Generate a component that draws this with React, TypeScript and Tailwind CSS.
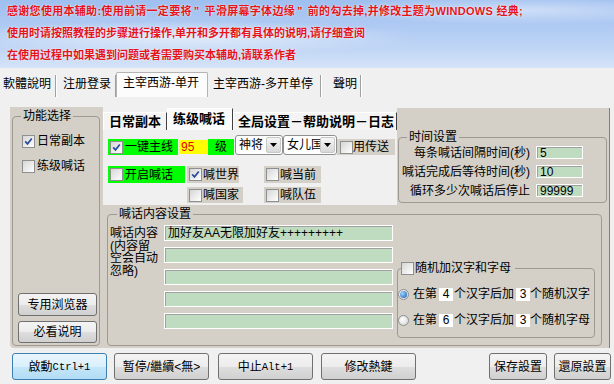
import type { ReactNode } from "react";
import clsx from "clsx";

function Check({ on = false }: { on?: boolean }) {
  return (
    <span className="flex h-[13px] w-[13px] shrink-0 items-center justify-center border border-[#8e8f8f] bg-[linear-gradient(135deg,#d6d6d6,#ffffff)]">
      {on && (
        <svg width="9" height="9" viewBox="0 0 9 9">
          <path d="M1.2 4.4 3.5 6.9 7.8 1.5" fill="none" stroke="#2b4d9c" strokeWidth="1.7" />
        </svg>
      )}
    </span>
  );
}

function Radio({ on = false }: { on?: boolean }) {
  return (
    <span className="flex h-[11px] w-[11px] shrink-0 items-center justify-center rounded-full border border-[#8e8f8f] bg-[radial-gradient(circle_at_40%_40%,#ffffff,#cfcfcf)]">
      {on && (
        <span className="h-[7px] w-[7px] rounded-full bg-[radial-gradient(circle_at_35%_35%,#9ad6ff,#1a56b0)]" />
      )}
    </span>
  );
}

function Btn({
  children,
  className,
  primary = false,
}: {
  children: ReactNode;
  className?: string;
  primary?: boolean;
}) {
  return (
    <div
      className={clsx(
        "flex shrink-0 items-center justify-center rounded-[3px] border",
        primary
          ? "border-[#3c7fb1] bg-[linear-gradient(#eaf6fd_0%,#d9f0fc_50%,#c4e6fa_51%,#b2dcf5_100%)]"
          : "border-[#707070] bg-[linear-gradient(#f4f4f4_0%,#ececec_50%,#dedede_51%,#d0d0d0_100%)]",
        className
      )}
    >
      {children}
    </div>
  );
}

function Select({ text, w }: { text: string; w: string }) {
  return (
    <div className={clsx("flex h-[20px] items-center rounded-[3px] border border-[#8e8f8f] bg-white pl-[3px]", w)}>
      <span className="w-0 flex-1 overflow-hidden whitespace-nowrap">{text}</span>
      <span className="mr-[1px] flex h-[16px] w-[15px] items-center justify-center rounded-[2px] border border-[#c8c8c8] bg-[linear-gradient(#f6f6f6,#d8d8d8)]">
        <svg width="7" height="4" viewBox="0 0 7 4">
          <path d="M0 0h7L3.5 4z" fill="#000" />
        </svg>
      </span>
    </div>
  );
}

const field = "border border-white bg-[#c0dcc0] shadow-[inset_1px_1px_0_#a0a0a0]";
const mono = "font-[family-name:'Liberation_Mono',monospace] text-[10.5px]";

export default function App() {
  return (
    <div className="h-[384px] w-[614px] overflow-hidden bg-[#f0f0f0] font-[family-name:'Liberation_Sans','Noto_Sans_CJK_SC',sans-serif] text-[12px] leading-[14px] text-black">
      {/* banner */}
      <div className="h-[68px] bg-[radial-gradient(ellipse_55%_35%_at_30%_55%,rgba(255,255,255,0.6),transparent_70%),radial-gradient(ellipse_45%_30%_at_85%_15%,rgba(255,255,255,0.45),transparent_70%),linear-gradient(180deg,#9fbff0_0%,#b6cff4_55%,#d4e3f8_100%)] pl-[7px] text-[11px] leading-[22px] font-bold whitespace-nowrap text-[#e5141b] [text-shadow:0_0_2px_#ffffff]">
        <p className="tracking-[0.3px]">
          感谢您使用本辅助:使用前请一定要将<span className="mr-[5px] ml-[2px]">”</span>平滑屏幕字体边缘<span className="mr-[5px] ml-[2px]">”</span>前的勾去掉,并修改主题为WINDOWS 经典;
        </p>
        <p>使用时请按照教程的步骤进行操作,单开和多开都有具体的说明,请仔细查阅</p>
        <p>在使用过程中如果遇到问题或者需要购买本辅助,请联系作者</p>
      </div>

      {/* outer tabs */}
      <div className="flex h-[29px] items-start pt-[4px]">
        <div className="mt-[3px] h-[22px] w-[56px] border-r border-[#a0a0a0] pt-[2px] pl-[3px] shadow-[1px_0_0_#ffffff]">軟體說明</div>
        <div className="mt-[3px] h-[22px] w-[60px] border-r border-[#a0a0a0] pt-[2px] pl-[7px] shadow-[1px_0_0_#ffffff]">注册登录</div>
        <div className="h-[25px] w-[92px] rounded-t-[2px] border border-b-0 border-[#b4b4b4] bg-[#fcfcfc] pt-[3px] pl-[6px]">主宰西游-单开</div>
        <div className="mt-[3px] h-[22px] w-[113px] border-r border-[#a0a0a0] pt-[2px] pl-[5px] shadow-[1px_0_0_#ffffff]">主宰西游-多开单停</div>
        <div className="mt-[3px] h-[22px] w-[40px] border-r border-[#a0a0a0] pt-[2px] pl-[12px] shadow-[1px_0_0_#ffffff]">聲明</div>
      </div>

      {/* page */}
      <div className="flex h-[253px] pt-[10px] pl-[10px]">
        {/* 功能选择 */}
        <div className="h-[241px] w-[93px] rounded-bl-[4px] bg-[#d4d0c8] pt-[2px] pr-[3px] pl-[2px]">
          <fieldset className="h-[237px] rounded-[4px] border border-[#9e9a91]">
            <legend className="ml-[8px] px-[2px]">功能选择</legend>
            <div className="flex h-[222px] flex-col pb-[2px]">
              <div className="mt-[11px] flex items-center pl-[9px]">
                <Check on />
                <span className="ml-[2px]">日常副本</span>
              </div>
              <div className="mt-[11px] flex items-center pl-[9px]">
                <Check />
                <span className="ml-[2px]">练级喊话</span>
              </div>
              <Btn className="mt-auto ml-[5px] h-[23px] w-[79px]">专用浏览器</Btn>
              <Btn className="mt-[5px] ml-[5px] h-[22px] w-[79px]">必看说明</Btn>
            </div>
          </fieldset>
        </div>

        {/* inner tab control */}
        <div className="mt-[1px] flex h-[240px] w-[507px] flex-col border-r border-[#808080]">
          <div className="flex h-[97px]">
            <div className="w-[294px]">
              <div className="flex h-[22px] items-end text-[13px] font-bold">
                <div className="h-[18px] w-[64px] border-t border-r border-l border-white border-r-[#404040] bg-[#f4f4f4] pl-[5px] leading-[18px]">日常副本</div>
                <div className="h-[22px] w-[66px] border-t border-r border-l border-white border-r-[#404040] bg-[#fbfbfb] pt-[1px] pl-[5px] leading-[18px]">练级喊话</div>
                <div className="h-[18px] w-[164px] border-t border-r border-l border-white border-r-[#404040] bg-[#f4f4f4] pl-[4px] leading-[18px] whitespace-nowrap">全局设置－帮助说明－日志</div>
              </div>
              <div className="h-[75px] pt-[5px] pl-[5px]">
                <div className="flex h-[20px] items-end">
                  <div className="flex h-[16px] w-[70px] items-center bg-[#00ff00] pl-[2px]">
                    <Check on />
                    <span className="ml-[2px]">一键主线</span>
                  </div>
                  <div className="mb-[1px] ml-[1px] h-[14px] w-[28px] bg-[#ffff00] pl-[2px] leading-[14px] text-[#e00000]">95</div>
                  <div className="ml-[1px] h-[16px] w-[26px] bg-[#00ff00] pl-[7px] leading-[16px]">级</div>
                  <div className="ml-[1px]"><Select text="神将" w="w-[48px]" /></div>
                  <Select text="女儿国" w="w-[54px]" />
                  <div className="flex h-[16px] w-[58px] items-center bg-[#d4d0c8] pl-[3px]">
                    <Check />
                    <span>用传送</span>
                  </div>
                </div>
                <div className="mt-[11px] flex">
                  <div className="flex h-[17px] w-[77px] items-center bg-[#00ff00] pl-[2px]">
                    <Check />
                    <span className="ml-[2px]">开启喊话</span>
                  </div>
                  <div className="ml-[2px] flex flex-col gap-[4px]">
                    <div className="flex h-[17px] w-[52px] items-center bg-[#d4d0c8] pl-[2px]">
                      <Check on />
                      <span className="ml-[1px]">喊世界</span>
                    </div>
                    <div className="flex h-[16px] w-[56px] items-center bg-[#d4d0c8] pl-[2px]">
                      <Check />
                      <span className="ml-[1px]">喊国家</span>
                    </div>
                  </div>
                  <div className="ml-[21px] flex flex-col gap-[4px]">
                    <div className="flex h-[17px] w-[57px] items-center bg-[#d4d0c8] pl-[2px]">
                      <Check />
                      <span className="ml-[1px]">喊当前</span>
                    </div>
                    <div className="flex h-[16px] w-[57px] items-center bg-[#d4d0c8] pl-[2px]">
                      <Check />
                      <span className="ml-[1px]">喊队伍</span>
                    </div>
                  </div>
                </div>
              </div>
            </div>

            {/* 时间设置 */}
            <div className="w-[212px] bg-[#d4d0c8] pt-[23px] pr-[2px] pl-[1px]">
              <fieldset className="rounded-[4px] border border-[#9e9a91] pb-[2px]">
                <legend className="ml-[8px] px-[2px] leading-[12px]">时间设置</legend>
                {[
                  ["每条喊话间隔时间(秒)", "5"],
                  ["喊话完成后等待时间(秒)", "10"],
                  ["循环多少次喊话后停止", "99999"],
                ].map(([label, v]) => (
                  <div key={label} className="flex h-[19px] items-center">
                    <span className="w-[131px] text-right whitespace-nowrap">{label}</span>
                    <span className={clsx(field, "ml-[6px] h-[13px] w-[47px] pl-[3px] leading-[12px]")}>{v}</span>
                  </div>
                ))}
              </fieldset>
            </div>
          </div>

          {/* 喊话内容设置 */}
          <div className="h-[143px] bg-[#d4d0c8] pt-[2px] pr-[7px] pl-[4px]">
            <fieldset className="h-[139px] rounded-[4px] border border-[#9e9a91]">
              <legend className="ml-[9px] px-[2px]">喊话内容设置</legend>
              <div className="flex">
                <div className="mt-[6px] ml-[2px] w-[49px] leading-[12.5px]">喊话内容(内容留空会自动忽略)</div>
                <div className="mt-[4px] ml-[5px] flex flex-col gap-[6px]">
                  <div className={clsx(field, "h-[16px] w-[229px] pl-[3px] leading-[15px]")}>加好友AA无限加好友+++++++++</div>
                  <div className={clsx(field, "h-[16px] w-[229px]")} />
                  <div className={clsx(field, "h-[16px] w-[229px]")} />
                  <div className={clsx(field, "h-[16px] w-[229px]")} />
                  <div className={clsx(field, "h-[16px] w-[229px]")} />
                </div>
                <fieldset className="mt-[40px] ml-[4px] h-[77px] w-[198px] rounded-[4px] border border-[#9e9a91]">
                  <legend className="ml-[3px] flex items-center pr-[4px]">
                    <Check />
                    <span className="ml-[1px]">随机加汉字和字母</span>
                  </legend>
                  <div className="mt-[12px] flex flex-col gap-[12px]">
                    {[
                      [true, "4", "3", "个随机汉字"],
                      [false, "6", "3", "个随机字母"],
                    ].map(([on, a, b, tail]) => (
                      <div key={String(tail)} className="flex h-[14px] items-center">
                        <Radio on={on as boolean} />
                        <span className="ml-[4px]">在第</span>
                        <span className="ml-[2px] h-[13px] w-[14px] bg-white text-center leading-[13px]">{a as string}</span>
                        <span className="ml-[1px]">个汉字后加</span>
                        <span className="ml-[2px] h-[13px] w-[14px] bg-white text-center leading-[13px]">{b as string}</span>
                        <span>{tail as string}</span>
                      </div>
                    ))}
                  </div>
                </fieldset>
              </div>
            </fieldset>
          </div>
        </div>
      </div>

      {/* bottom buttons */}
      <div className="flex pt-[3px] pl-[12px]">
        <Btn primary className="h-[27px] w-[95px]">
          啟動<span className={mono}>Ctrl+1</span>
        </Btn>
        <Btn className="ml-[7px] h-[27px] w-[95px]">暂停/繼續&lt;無&gt;</Btn>
        <Btn className="ml-[9px] h-[27px] w-[95px]">
          中止<span className={mono}>Alt+1</span>
        </Btn>
        <Btn className="ml-[8px] h-[27px] w-[95px]">修改熱鍵</Btn>
        <Btn className="ml-[73px] h-[27px] w-[58px]">保存設置</Btn>
        <Btn className="ml-[7px] h-[27px] w-[57px]">還原設置</Btn>
      </div>
    </div>
  );
}
